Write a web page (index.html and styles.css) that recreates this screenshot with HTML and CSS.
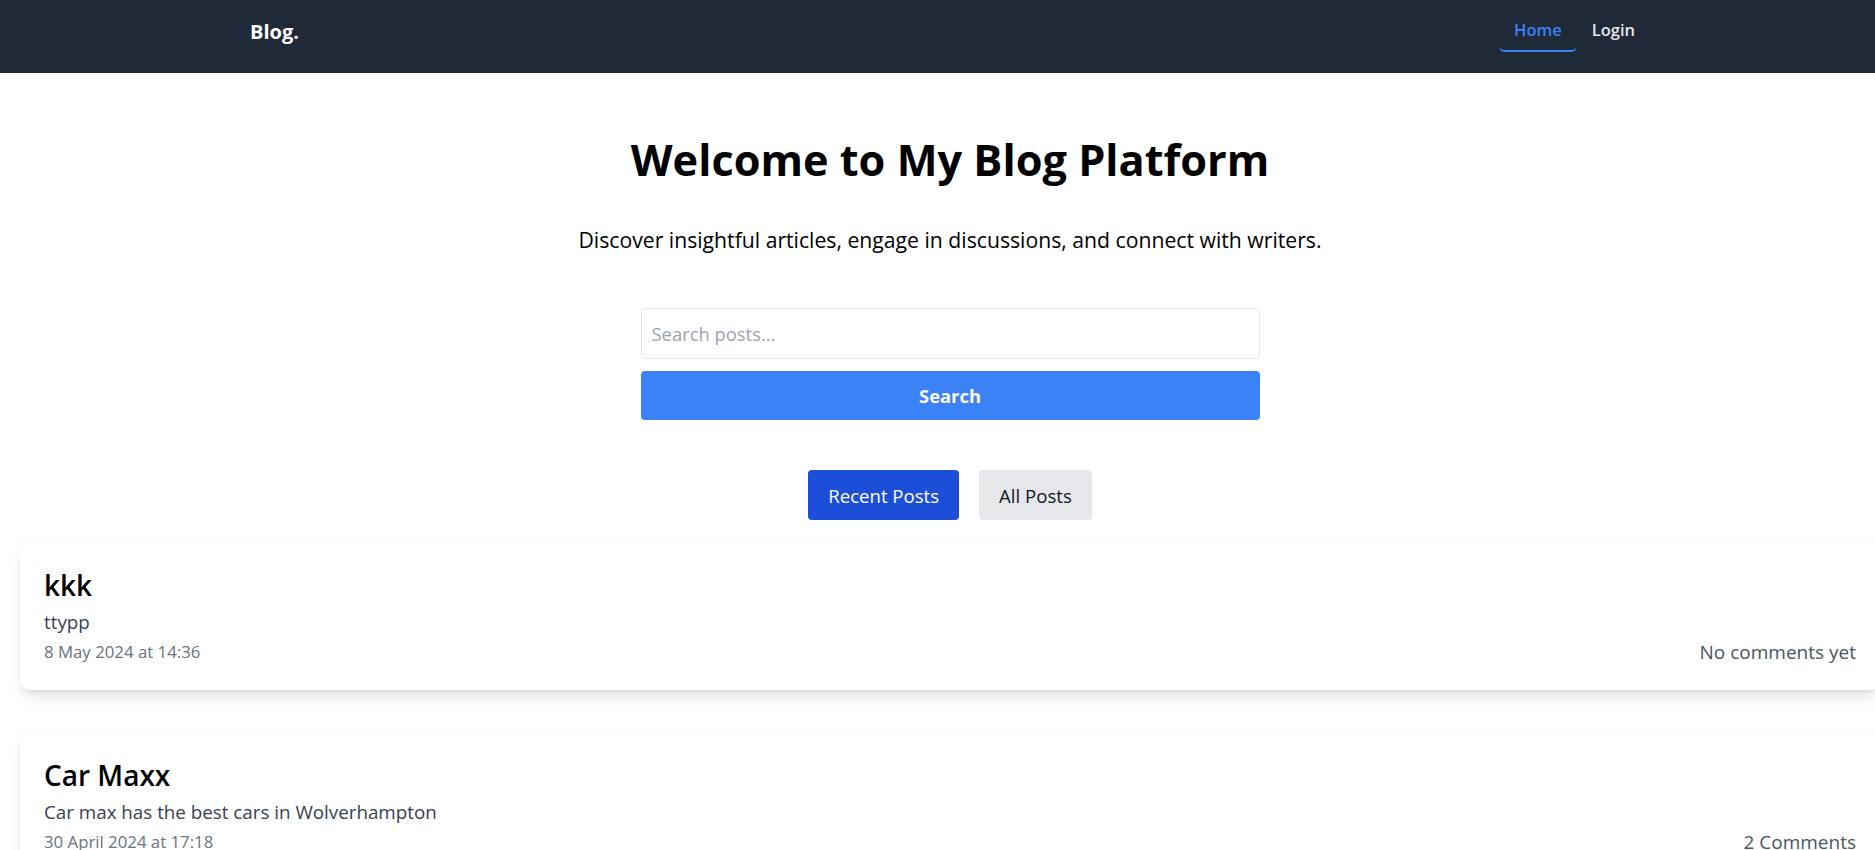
FILE: index.html
```html
<!DOCTYPE html>
<html lang="en">
<head>
<meta charset="utf-8">
<title>Blog</title>
<link rel="stylesheet" href="styles.css">
</head>
<body>
<div class="page">
  <nav class="navbar">
    <div class="nav-inner">
      <a class="logo" href="#">Blog.</a>
      <div class="nav-links">
        <a class="nav-link active" href="#">Home</a>
        <a class="nav-link" href="#">Login</a>
      </div>
    </div>
  </nav>
  <main class="main">
    <section class="hero">
      <h1 class="hero-title">Welcome to My Blog Platform</h1>
      <p class="hero-sub">Discover insightful articles, engage in discussions, and connect with writers.</p>
      <form class="search">
        <input class="search-input" type="text" placeholder="Search posts...">
        <button class="search-btn" type="button">Search</button>
      </form>
      <div class="tabs">
        <button class="tab tab-active" type="button">Recent Posts</button>
        <button class="tab" type="button">All Posts</button>
      </div>
    </section>
    <section class="posts">
      <article class="card">
        <h2 class="card-title">kkk</h2>
        <p class="card-desc">ttypp</p>
        <div class="card-meta">
          <span class="card-date">8 May 2024 at 14:36</span>
          <span class="card-comments">No comments yet</span>
        </div>
      </article>
      <article class="card">
        <h2 class="card-title">Car Maxx</h2>
        <p class="card-desc">Car max has the best cars in Wolverhampton</p>
        <div class="card-meta">
          <span class="card-date">30 April 2024 at 17:18</span>
          <span class="card-comments">2 Comments</span>
        </div>
      </article>
    </section>
  </main>
</div>
</body>
</html>
```
FILE: styles.css
```css
html {
  scrollbar-width: none;
}
html::-webkit-scrollbar {
  display: none;
}
body {
  margin: 0;
  overflow-x: hidden;
  font-family: "Open Sans", "Noto Sans", Arial, sans-serif;
  color: #000;
  background: #fff;
}
.page {
  width: 1900px;
}
.navbar {
  background: #1f2937;
  height: 73px;
  box-sizing: border-box;
  padding-top: 10px;
}
.nav-inner {
  max-width: 1400px;
  margin: 0 auto;
  display: flex;
  justify-content: space-between;
  align-items: center;
  height: 42px;
}
.logo {
  color: #fff;
  font-size: 20px;
  font-weight: 700;
  text-decoration: none;
}
.nav-links {
  display: flex;
}
.nav-link {
  display: block;
  padding: 8px 15px;
  line-height: 24px;
  font-size: 16.5px;
  font-weight: 600;
  color: #e5e7eb;
  text-decoration: none;
  border-bottom: 2px solid transparent;
  border-radius: 6px;
}
.nav-link.active {
  color: #3b82f6;
  border-bottom-color: #3b82f6;
}
.main {
  padding-top: 63px;
}
.hero {
  display: flex;
  flex-direction: column;
  align-items: center;
}
.hero-title {
  margin: 0 0 42px;
  font-size: 43.3px;
  line-height: 48px;
  font-weight: 700;
}
.hero-sub {
  margin: 0 0 54px;
  font-size: 21.2px;
  line-height: 28px;
}
.search {
  width: 619px;
  display: flex;
  flex-direction: column;
  gap: 12px;
}
.search-input {
  height: 51px;
  box-sizing: border-box;
  border: 1px solid #e5e7eb;
  border-radius: 4px;
  padding: 0 10px;
  font-family: inherit;
  font-size: 18.4px;
  color: #111827;
  outline: none;
}
.search-input::placeholder {
  color: #9ca3af;
}
.search-btn {
  height: 49px;
  border: none;
  border-radius: 4px;
  background: #3b82f6;
  color: #fff;
  font-family: inherit;
  font-size: 18.4px;
  font-weight: 700;
}
.tabs {
  margin-top: 50px;
  display: flex;
  gap: 20px;
}
.tab {
  height: 50px;
  padding: 0 20px;
  border: none;
  border-radius: 4px;
  background: #e5e7eb;
  color: #111827;
  font-family: inherit;
  font-size: 18.6px;
}
.tab-active {
  background: #1d4ed8;
  color: #fff;
}
.posts {
  margin-top: 20px;
  padding: 0 20px;
  display: flex;
  flex-direction: column;
  gap: 40px;
}
.card {
  background: #fff;
  border-radius: 10px;
  padding: 24px;
  height: 150px;
  box-sizing: border-box;
  box-shadow: 0 10px 15px -3px rgba(0,0,0,0.1), 0 4px 6px -4px rgba(0,0,0,0.1), 0 0 6px rgba(0,0,0,0.03);
}
.card-title {
  margin: 3px 0 5px;
  font-size: 28px;
  line-height: 36px;
  font-weight: 600;
}
.card-desc {
  margin: 0;
  font-size: 18.8px;
  line-height: 28px;
  color: #374151;
}
.card-meta {
  margin-top: 4px;
  display: flex;
  justify-content: space-between;
  align-items: center;
  line-height: 24px;
}
.card-date {
  font-size: 16.8px;
  color: #6b7280;
}
.card-comments {
  font-size: 19px;
  color: #4b5563;
}
```
